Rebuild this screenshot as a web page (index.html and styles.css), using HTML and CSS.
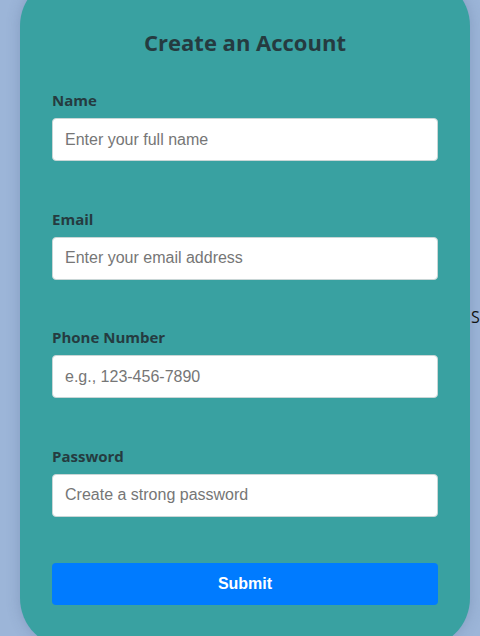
FILE: index.html
```html
<!DOCTYPE html>
<html lang="en">
<head>
<meta charset="utf-8">
<title>Create an Account</title>
<link rel="stylesheet" href="styles.css">
</head>
<body>
<div class="page">
  <form class="card">
    <h2 class="title">Create an Account</h2>
    <div class="field">
      <label class="label" for="name">Name</label>
      <input class="input" id="name" type="text" placeholder="Enter your full name">
    </div>
    <div class="field">
      <label class="label" for="email">Email</label>
      <input class="input" id="email" type="email" placeholder="Enter your email address">
    </div>
    <div class="field">
      <label class="label" for="phone">Phone Number</label>
      <input class="input" id="phone" type="tel" placeholder="e.g., 123-456-7890">
    </div>
    <div class="field">
      <label class="label" for="password">Password</label>
      <input class="input" id="password" type="password" placeholder="Create a strong password">
    </div>
    <button class="submit" type="button">Submit</button>
  </form>
  <span class="stray">S</span>
</div>
</body>
</html>
```

FILE: styles.css
```css
html, body {
  margin: 0;
  padding: 0;
  background: #9cb5d8;
  overflow: hidden;
  height: 100%;
}

.page {
  position: relative;
  display: flow-root;
  width: 480px;
  height: 636px;
}

.card {
  box-sizing: border-box;
  width: 450px;
  margin: -24px 0 0 20px;
  height: 672px;
  padding: 32px 32px 0 32px;
  background: #39a1a1;
  border-radius: 50px;
  box-shadow: 0 0 14px rgba(60, 80, 120, 0.25);
  display: flex;
  flex-direction: column;
}

.title {
  margin: 19px 0 33px 0;
  font-family: "Open Sans", sans-serif;
  font-weight: 700;
  font-size: 22px;
  line-height: 30px;
  text-align: center;
  color: #253b40;
}

.field {
  display: flex;
  flex-direction: column;
  margin-bottom: 47.67px;
}

.field:last-of-type {
  margin-bottom: 46px;
}

.label {
  font-family: "Open Sans", sans-serif;
  font-weight: 700;
  font-size: 15px;
  line-height: 20px;
  color: #253b40;
  margin-bottom: 8px;
}

.input {
  box-sizing: border-box;
  width: 100%;
  height: 43px;
  padding: 0 12px;
  border: 1px solid #c9d6d6;
  border-radius: 4px;
  background: #fff;
  font-family: "Liberation Sans", Arial, sans-serif;
  font-size: 16px;
  color: #333;
}

.input::placeholder {
  color: #767676;
}

.submit {
  height: 42px;
  width: 100%;
  border: none;
  border-radius: 4px;
  background: #007bff;
  color: #fff;
  font-family: "Liberation Sans", Arial, sans-serif;
  font-weight: 700;
  font-size: 16px;
}

.stray {
  position: absolute;
  left: 471px;
  top: 306px;
  font-family: "Open Sans", sans-serif;
  font-size: 16px;
  line-height: 22px;
  color: #111;
}
```
